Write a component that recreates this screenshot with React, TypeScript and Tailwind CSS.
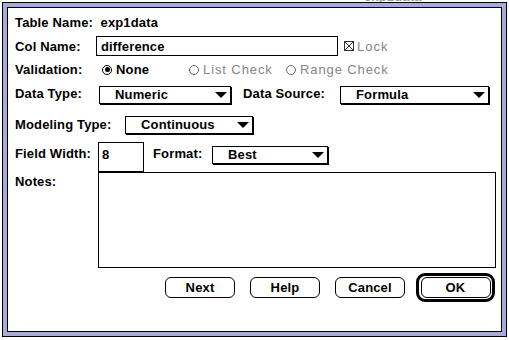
import type { ReactNode } from "react";

const font = "font-['Liberation_Sans',Arial,sans-serif] font-bold text-[13px] leading-[15px] tracking-[0.15px]";

function Arrow() {
  return (
    <svg width="12" height="6" viewBox="0 0 12 6" className="shrink-0">
      <polygon points="0,0 12,0 6,6" fill="#000" />
    </svg>
  );
}

function Popup({ label, w }: { label: string; w: string }) {
  return (
    <div
      className={`${w} h-[18px] border border-black bg-white shadow-[1px_1px_0_#000] flex items-center pl-[15px] pr-[3px] shrink-0`}
    >
      <span className="flex-1 pb-[1px]">{label}</span>
      <Arrow />
    </div>
  );
}

function Radio({ on, disabled, w, children }: { on?: boolean; disabled?: boolean; w: string; children: ReactNode }) {
  return (
    <div className={`${w} shrink-0 flex items-center gap-[4px] ${disabled ? "text-[#858585]" : "text-black"}`}>
      <div
        className={`w-[10px] h-[10px] rounded-full border flex items-center justify-center ${
          disabled ? "border-[#666]" : "border-black"
        }`}
      >
        {on && <div className="w-[5px] h-[5px] rounded-full bg-black" />}
      </div>
      <span>{children}</span>
    </div>
  );
}

function Btn({ children }: { children: ReactNode }) {
  return (
    <div className="w-[70px] h-[21px] border border-black rounded-[6px] flex items-center justify-center bg-white">
      {children}
    </div>
  );
}

export default function App() {
  return (
    <div className={`relative w-[509px] h-[340px] bg-white overflow-hidden text-black ${font}`}>
      {/* bit of the window behind */}
      <div className="absolute left-[364px] -top-[11px] text-[#9a9a9a]">exp1data</div>

      <div className="relative ml-[2px] mt-[2px] w-[505px] h-[335px] border border-black bg-[#a9a9d9] p-[4px]">
        <div className="w-full h-full border border-black bg-white pl-[7px] pr-[4px] pt-[5px] flex flex-col">
          {/* Table name */}
          <div className="h-[19px] flex items-center">Table Name:&nbsp; exp1data</div>

          {/* Col name */}
          <div className="mt-[4px] h-[20px] flex items-center">
            <span className="w-[81px] shrink-0">Col Name:</span>
            <div className="w-[242px] h-[20px] shrink-0 border border-black flex items-center pl-[4px]">
              difference
            </div>
            <div className="ml-[6px] flex items-center gap-[3px] text-[#858585]">
              <svg width="10" height="10" viewBox="0 0 10 10">
                <rect x="0.5" y="0.5" width="9" height="9" fill="none" stroke="#333" />
                <path d="M1 1 L9 9 M9 1 L1 9" stroke="#333" strokeWidth="1" />
              </svg>
              <span className="font-normal tracking-[1px]">Lock</span>
            </div>
          </div>

          {/* Validation */}
          <div className="mt-[4px] h-[19px] flex items-center">
            <span className="w-[87px] shrink-0">Validation:</span>
            <Radio on w="w-[87px]">None</Radio>
            <Radio disabled w="w-[97px]">
              <span className="font-normal tracking-[0.9px]">List Check</span>
            </Radio>
            <Radio disabled w="w-[110px]">
              <span className="font-normal tracking-[0.9px]">Range Check</span>
            </Radio>
          </div>

          {/* Data type / source */}
          <div className="mt-[7px] h-[18px] flex items-center">
            <span className="w-[84px] shrink-0 pb-[3px]">Data Type:</span>
            <Popup label="Numeric" w="w-[132px]" />
            <span className="ml-[12px] w-[97px] shrink-0 pb-[3px]">Data Source:</span>
            <Popup label="Formula" w="w-[149px]" />
          </div>

          {/* Modeling type */}
          <div className="mt-[12px] h-[18px] flex items-center">
            <span className="w-[110px] shrink-0 pb-[1px]">Modeling Type:</span>
            <Popup label="Continuous" w="w-[128px]" />
          </div>

          {/* Field width / format */}
          <div className="mt-[8px] h-[30px] flex items-start">
            <span className="w-[83px] shrink-0 pt-[4px]">Field Width:</span>
            <div className="w-[46px] h-[30px] shrink-0 border border-black pl-[3px] pt-[4px]">8</div>
            <span className="ml-[9px] w-[59px] shrink-0 pt-[4px]">Format:</span>
            <div className="mt-[4px]">
              <Popup label="Best" w="w-[116px]" />
            </div>
          </div>

          {/* Notes */}
          <div className="h-[96px] flex items-start">
            <span className="w-[83px] shrink-0 pt-[2px]">Notes:</span>
            <div className="w-[398px] h-[96px] border border-black" />
          </div>

          {/* Buttons */}
          <div className="mt-[5px] flex items-center">
            <div className="ml-[150px]">
              <Btn>Next</Btn>
            </div>
            <div className="ml-[15px]">
              <Btn>Help</Btn>
            </div>
            <div className="ml-[15px]">
              <Btn>Cancel</Btn>
            </div>
            <div className="ml-[11px] w-[79px] h-[29px] border-[3px] border-black rounded-[9px] flex items-center justify-center">
              <Btn>OK</Btn>
            </div>
          </div>
        </div>
      </div>
    </div>
  );
}
